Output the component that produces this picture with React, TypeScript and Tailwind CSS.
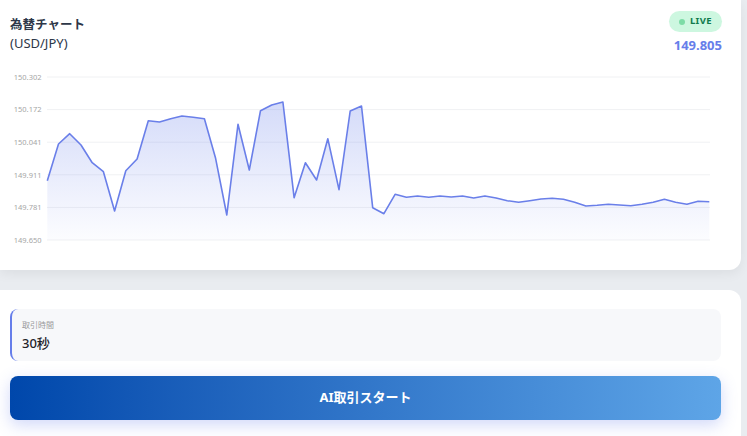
import React from "react";

const ys = [
  180.7, 144, 133.7, 145, 162.7, 171.7, 211, 170.7, 159, 120.7,
  122, 118.7, 116, 117.3, 118.7, 158.3, 215, 124.3, 170, 110.7,
  105, 102, 197.7, 162.7, 180, 138.7, 189.7, 111, 106, 207.7,
  213.7, 194.3, 197.3, 196, 197.3, 196, 197, 196, 198, 196,
  198, 200.7, 202.3, 200.7, 199, 198.3, 199.3, 202.3, 206, 205.3,
  204.3, 205, 205.7, 204.3, 202.3, 199.3, 202.3, 204.3, 201.3, 201.7,
];
const x0 = 47.3;
const x1 = 709.3;
const step = (x1 - x0) / (ys.length - 1);
const pts = ys.map((y, i) => [x0 + i * step, y] as const);
const line = pts.map(([x, y], i) => `${i === 0 ? "M" : "L"}${x.toFixed(1)},${y}`).join(" ");
const area = `${line} L${x1},240 L${x0},240 Z`;

const grid = [
  { y: 77, l: "150.302" },
  { y: 109.6, l: "150.172" },
  { y: 142.2, l: "150.041" },
  { y: 174.8, l: "149.911" },
  { y: 207.4, l: "149.781" },
  { y: 240, l: "149.650" },
];

export default function App() {
  return (
    <div
      className="w-[747px] h-[436px] overflow-hidden bg-[#e9ecf0] flex flex-col"
      style={{ fontFamily: '"Noto Sans", "Noto Sans CJK JP", sans-serif' }}
    >
      <div className="mr-[6px] h-[270px] shrink-0 bg-white rounded-br-xl shadow-[0_4px_12px_rgba(0,0,0,0.06)] flex flex-col">
        <div className="h-[62px] flex justify-between pl-[10px] pr-[19px] pt-[16px]">
          <div className="flex flex-col">
            <div className="text-[12.5px] leading-[18px] font-bold text-[#2d3748]">為替チャート</div>
            <div className="text-[13px] leading-[18px] text-[#2d3748]">(USD/JPY)</div>
          </div>
          <div className="flex flex-col items-end -mt-[5px]">
            <div className="h-[21px] pl-[10px] pr-[10px] rounded-full bg-[#cdf7e0] flex items-center gap-[5px]">
              <span className="w-[6px] h-[6px] rounded-full bg-[#7ddca7]" />
              <span className="text-[9.5px] font-bold text-[#0f7a4c] tracking-[0.4px]">LIVE</span>
            </div>
            <div className="mt-[4px] text-[13px] leading-[18px] font-bold text-[#667eea]">149.805</div>
          </div>
        </div>
        <svg width="720" height="200" viewBox="0 62 720 200" className="block">
          <defs>
            <linearGradient id="fillg" x1="0" y1="0" x2="0" y2="1" gradientUnits="objectBoundingBox">
              <stop offset="0" stopColor="#667eea" stopOpacity="0.28" />
              <stop offset="1" stopColor="#667eea" stopOpacity="0.02" />
            </linearGradient>
          </defs>
          {grid.map((g) => (
            <g key={g.l}>
              <line x1="47" x2="710" y1={g.y} y2={g.y} stroke="#f0f1f3" strokeWidth="1" />
              <text
                x="41.5"
                y={g.y + 2.7}
                textAnchor="end"
                fontSize="7.5"
                fill="#a6a6a6"
                fontFamily='"Noto Sans", sans-serif'
              >
                {g.l}
              </text>
            </g>
          ))}
          <path d={area} fill="url(#fillg)" />
          <path d={line} fill="none" stroke="#6a7fe9" strokeWidth="1.6" strokeLinejoin="round" />
        </svg>
      </div>
      <div className="mt-[20px] mr-[6px] flex-1 bg-white rounded-tr-xl pt-[19px] pl-[10px] pr-[20px] flex flex-col">
        <div className="h-[52px] rounded-lg bg-[#f7f8fa] border-l-2 border-[#667eea] pl-[10px] flex flex-col justify-center">
          <div className="text-[8px] leading-[12px] text-[#9a9a9a]">取引時間</div>
          <div className="mt-[3px] text-[13px] leading-[18px] font-medium text-[#1f2328]">30秒</div>
        </div>
        <button className="mt-[15px] h-[44px] rounded-lg bg-gradient-to-r from-[#0047ab] to-[#5ea5e7] text-white text-[13px] font-bold shadow-[0_5px_16px_rgba(102,126,234,0.3)] flex items-center justify-center">
          AI取引スタート
        </button>
      </div>
    </div>
  );
}
